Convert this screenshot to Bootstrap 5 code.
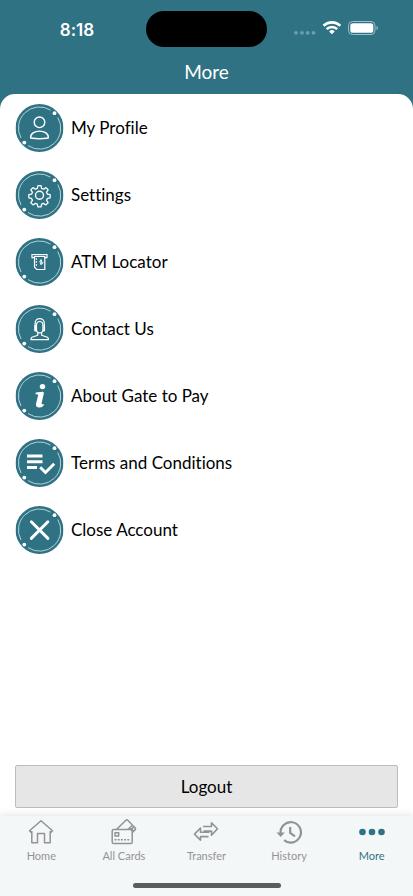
<!DOCTYPE html>
<html lang="en">
<head>
<meta charset="utf-8">
<meta name="viewport" content="width=device-width, initial-scale=1">
<title>More</title>
<link href="https://cdn.jsdelivr.net/npm/bootstrap@5.3.0/dist/css/bootstrap.min.css" rel="stylesheet">
<style>
:root { --teal: #2f7284; }
body { font-family: Lato, "Open Sans", sans-serif; font-variant-ligatures: none; background: var(--teal); color: #000; }
.status { height: 57px; font-family: Inter, Roboto, sans-serif; }
.status-side { flex: 1 1 0; }
.clock { font-size: 17px; line-height: 20px; font-weight: 600; }
.island { width: 121px; height: 36px; margin-top: 11px; background: #000; }
.screen-title { font-size: 19px; line-height: 24px; padding: 3px 0 10px; font-weight: 400; }
.sheet { border-radius: 15px 15px 0 0; padding: 10px 15px 8px; }
.menu-list { gap: 19px; }
.menu-link { gap: 7px; font-size: 17px; line-height: 24px; color: #000; }
.disc { width: 49px; height: 48px; }
.logout { height: 43px; font-size: 17px; line-height: 24px; background: #e6e6e6; border: 1px solid #bdbdbd; border-radius: 2px; color: #000; }
.tabs { background: #f4f7f7; box-shadow: 0 0 9px rgba(0,0,0,.14); padding-top: 2px; }
.tab { font-size: 11px; line-height: 16px; color: #929494; }
.tab.active { color: var(--teal); }
.tab svg { width: 30px; height: 30px; fill: none; stroke: currentColor; }
.home-bar { width: 148px; height: 5px; margin: 19px auto 8px; background: #5b5d5d; }
</style>
<script src="https://cdn.jsdelivr.net/npm/bootstrap@5.3.0/dist/js/bootstrap.bundle.min.js"></script>
</head>
<body class="d-flex flex-column min-vh-100">
<svg class="d-none" aria-hidden="true">
  <symbol id="ring" viewBox="0 0 48 48">
    <circle cx="24" cy="24" r="24" fill="#2f7284"/>
    <path d="M35 6.100A21 21 0 0 0 5.500 34M42.300 13.500A21 21 0 0 1 12.500 41.600" fill="none" stroke="#c5dce1" stroke-width=".9"/>
    <circle cx="39" cy="9.200" r="1.900" fill="#fff"/><circle cx="8.800" cy="38.600" r="1.900" fill="#fff"/>
  </symbol>
</svg>

<header class="text-white">
  <div class="status d-flex align-items-start">
    <div class="status-side d-flex justify-content-center pt-3"><span class="clock mt-1 ps-2">8:18</span></div>
    <div class="island rounded-pill"></div>
    <div class="status-side d-flex justify-content-center pt-3">
      <svg class="mt-1 me-2" width="86" height="18" viewBox="0 0 86 18" role="img" aria-label="Wi-Fi, battery full">
        <g fill="#6d9eac"><circle cx="3" cy="12.800" r="1.900"/><circle cx="9" cy="12.800" r="1.900"/><circle cx="14.700" cy="12.800" r="1.900"/><circle cx="20.500" cy="12.800" r="1.900"/></g>
        <g fill="none" stroke="#fff" stroke-width="2.600"><path d="M30.500 5.800a12 12 0 0 1 16.800 0M33.600 9.200a7.500 7.500 0 0 1 10.600 0"/></g>
        <path d="M38.900 14.300l-2.800-2.900a4 4 0 0 1 5.600 0z" fill="#fff"/>
        <rect x="55.500" y="1.500" width="26.500" height="13" rx="4" fill="none" stroke="#9fbfc8"/>
        <rect x="57.300" y="3.200" width="23" height="9.600" rx="2.600" fill="#fff"/>
        <path d="M83.500 6c1.800.6 1.800 3.400 0 4z" fill="#9fbfc8"/>
      </svg>
    </div>
  </div>
  <h1 class="screen-title text-center m-0">More</h1>
</header>

<main class="sheet bg-white flex-grow-1 d-flex flex-column">
  <ul class="menu-list list-unstyled d-flex flex-column mb-4">
    <li><a href="#profile" class="menu-link d-flex align-items-center text-decoration-none">
      <svg class="disc" viewBox="0 0 48 48" aria-hidden="true"><use href="#ring"/><g fill="none" stroke="#fff" stroke-width="1.400"><circle cx="24" cy="18.300" r="5.300"/><path d="M15.200 34c-1.200-9.200 18.800-9.200 17.600 0q-8.800 1.600-17.600 0z" stroke-linejoin="round"/></g></svg>
      <span>My Profile</span></a></li>
    <li><a href="#settings" class="menu-link d-flex align-items-center text-decoration-none">
      <svg class="disc" viewBox="0 0 48 48" aria-hidden="true"><use href="#ring"/><g fill="none" stroke="#fff" stroke-width="1.400" stroke-linejoin="round"><circle cx="24" cy="24.300" r="4"/><path transform="translate(1.900 1.900) scale(.92)" d="M22.300 13.800h3.400l.6 3 2.100.9 2.600-1.700 2.400 2.400-1.700 2.600.9 2.100 3 .6v3.400l-3 .6-.9 2.100 1.700 2.600-2.400 2.400-2.600-1.700-2.100.9-.6 3h-3.400l-.6-3-2.100-.9-2.600 1.700-2.400-2.400 1.700-2.600-.9-2.100-3-.6v-3.400l3-.6.9-2.100-1.700-2.600 2.400-2.400 2.600 1.700 2.100-.9z"/></g></svg>
      <span>Settings</span></a></li>
    <li><a href="#atm" class="menu-link d-flex align-items-center text-decoration-none">
      <svg class="disc" viewBox="0 0 48 48" aria-hidden="true"><use href="#ring"/><g fill="none" stroke="#fff" stroke-width="1.200"><path d="M19 19.700h-2.500v-3.200h15v3.200H29"/><path d="M19 18.300h10.300v13.200h-8l-2.300-2.300z"/><path d="M20.800 20v8" stroke-width="1" stroke-dasharray="2 1"/><path d="M26.500 22.800c-1.500-1.300-3 .8-1.700 1.300s2.800-.8 2.600.6-2 1.700-3.100.5M25.600 21.200v5.800" stroke-width="1"/></g></svg>
      <span>ATM Locator</span></a></li>
    <li><a href="#contact" class="menu-link d-flex align-items-center text-decoration-none">
      <svg class="disc" viewBox="0 0 48 48" aria-hidden="true"><use href="#ring"/><g fill="none" stroke="#fff" stroke-width="1.200" stroke-linejoin="round"><path d="M19.600 26v-7.500c0-6.600 9.200-6.600 9.200 0V26"/><path d="M21 19.500c.3-4 6.100-4 6.400 0v4.700c0 5-6.400 5-6.400 0z"/><path d="M19.600 20v5.800h1.400M28.800 20v5.800h-1.400" stroke-width="1.500"/><path d="M22.300 27.500v2.700l-5.800 2q-1.200.8-1 2.400h17.400q.2-1.600-1-2.400l-5.800-2v-2.700"/></g></svg>
      <span>Contact Us</span></a></li>
    <li><a href="#about" class="menu-link d-flex align-items-center text-decoration-none">
      <svg class="disc" viewBox="0 0 48 48" aria-hidden="true"><use href="#ring"/><g fill="#fff"><circle cx="27" cy="14.600" r="2.700"/><path d="M20.300 20.600l6.700-.8c1.500 0 1.500 1 1.200 2.300l-2 8.600c-.4 1.700.8 2.100 2.300 1.200-.4 3-3.200 3.600-5.200 3.500-2.600-.1-3.200-1.700-2.700-3.800l1.900-7.500c.3-1.500-.5-2-2.500-1.600z"/></g></svg>
      <span>About Gate to Pay</span></a></li>
    <li><a href="#terms" class="menu-link d-flex align-items-center text-decoration-none">
      <svg class="disc" viewBox="0 0 48 48" aria-hidden="true"><use href="#ring"/><g fill="none" stroke="#fff" stroke-width="2.900"><path d="M11.500 17H27M11.500 22.800H27M11.500 28.500H21.500"/><path d="M24.700 28.200l5.300 5.300 8.700-8.800"/></g></svg>
      <span>Terms and Conditions</span></a></li>
    <li><a href="#close" class="menu-link d-flex align-items-center text-decoration-none">
      <svg class="disc" viewBox="0 0 48 48" aria-hidden="true"><use href="#ring"/><path d="M15.800 15.800l16.600 16.600M32.400 15.800l-16.600 16.600" stroke="#fff" stroke-width="2.900" stroke-linecap="round"/></svg>
      <span>Close Account</span></a></li>
  </ul>
  <button type="button" class="btn logout w-100 p-0 mt-auto">Logout</button>
</main>

<nav class="tabs" aria-label="Main">
  <div class="d-flex">
    <a href="#home" class="tab col d-flex flex-column align-items-center text-decoration-none">
      <svg viewBox="0 0 30 30" stroke-width="1.500" stroke-linejoin="round" aria-hidden="true"><path d="M3.500 12.800L15 2.700l11.500 10.100-1.400 1.500-.9-.8v11.300h-5.700v-9.300h-7v9.300H5.800V13.500l-.9.800z"/></svg>
      <span>Home</span></a>
    <a href="#cards" class="tab col d-flex flex-column align-items-center text-decoration-none">
      <svg viewBox="0 0 30 30" stroke-width="1.500" stroke-linejoin="round" aria-hidden="true"><rect x="3.200" y="11.500" width="20" height="14" rx="1.600"/><path d="M7.500 11.500l9.300-9.200q1-.9 2 0l4.700 4.900-4.600 4.300M21 9.500l3.500 3.500-1.300 1.500M23.500 7.200l2.700 2.700q.8.900 0 1.700l-3 3M25 8.700l-3.300 3.500"/><rect x="6" y="14.700" width="3.700" height="3.200"/><path d="M5.500 21.700H21.500" stroke-dasharray="2 1.200"/></svg>
      <span>All Cards</span></a>
    <a href="#transfer" class="tab col d-flex flex-column align-items-center text-decoration-none">
      <svg viewBox="0 0 30 30" stroke-width="1.600" stroke-linejoin="round" aria-hidden="true"><path d="M12 8.500h8.500V4.800l6 6-6 6.300v-4H12.500M17.500 18.600H9.500v3.700l-6-6.200 6-6.100v4.300h9"/></svg>
      <span>Transfer</span></a>
    <a href="#history" class="tab col d-flex flex-column align-items-center text-decoration-none">
      <svg viewBox="0 0 30 30" stroke-width="2.200" aria-hidden="true"><path d="M6.600 15.500A10.200 10.200 0 1 1 10.100 22.100"/><path d="M16.200 9v6l4.800 3.300"/><path d="M2.500 14.500h8.200l-4 4.500z" fill="currentColor" stroke="none"/></svg>
      <span>History</span></a>
    <a href="#more" class="tab active col d-flex flex-column align-items-center text-decoration-none" aria-current="page">
      <svg viewBox="0 0 30 30" aria-hidden="true"><g fill="currentColor" stroke="none"><circle cx="5.500" cy="14" r="3.300"/><circle cx="15" cy="14" r="3.300"/><circle cx="24.500" cy="14" r="3.300"/></g></svg>
      <span>More</span></a>
  </div>
  <div class="home-bar rounded-pill"></div>
</nav>
</body>
</html>
